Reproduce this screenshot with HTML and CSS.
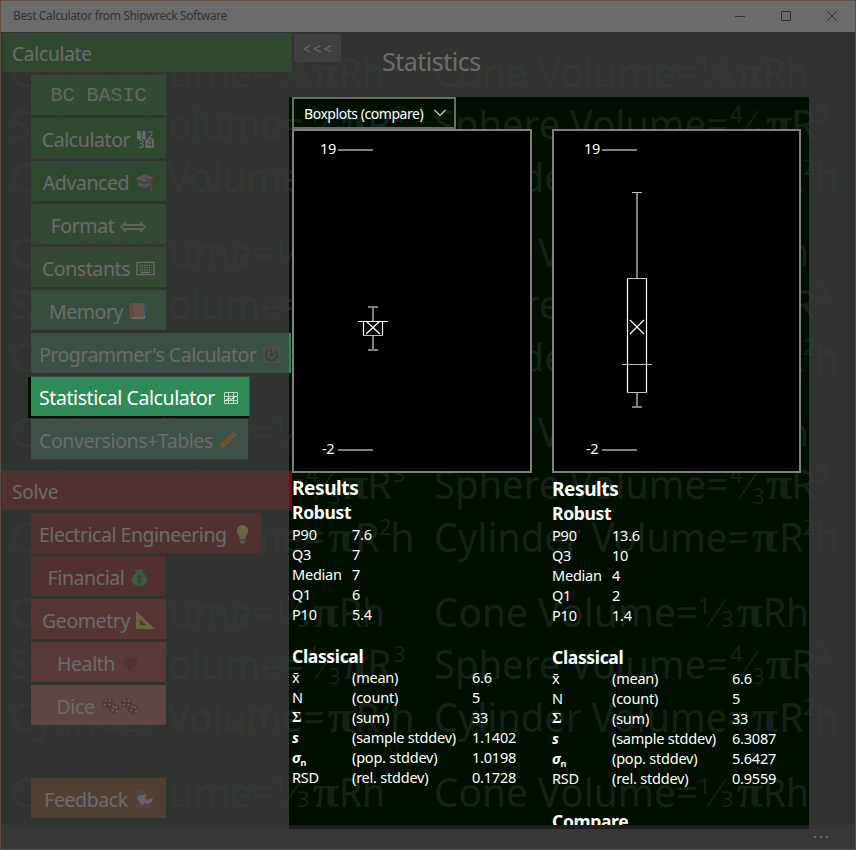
FILE: index.html
```html
<!DOCTYPE html>
<html lang="en">
<head>
<meta charset="utf-8">
<title>Best Calculator from Shipwreck Software</title>
<link rel="stylesheet" href="styles.css">
</head>
<body>
<div class="window">
  <header class="titlebar">
    <span class="app-title">Best Calculator from Shipwreck Software</span>
    <svg class="caption-buttons" width="138" height="31" viewBox="0 0 138 31" fill="none" stroke="#000"><path d="M18 15.500h10M64.500 10.500h9v9h-9zM110 10l10 10M120 10l-10 10"/></svg>
  </header>

  <div class="content">
    <svg class="watermark" width="854" height="793" viewBox="1 31 854 793">
      <defs>
        <g id="formulas">
          <text x="10" y="86" textLength="264" lengthAdjust="spacingAndGlyphs">Cone Volume=</text>
          <text class="num" x="274" y="73">1</text><path d="M283 86l19-28"/><text class="num" x="297" y="86">3</text>
          <text class="pi" x="313" y="86" textLength="26" lengthAdjust="spacingAndGlyphs">π</text>
          <text x="339" y="86" textLength="46" lengthAdjust="spacingAndGlyphs">Rh</text>

          <text x="10" y="138" textLength="294" lengthAdjust="spacingAndGlyphs">Sphere Volume=</text>
          <text class="num" x="306" y="121">4</text><path d="M315 138l19-28"/><text class="num" x="328" y="143">3</text>
          <text class="pi" x="342" y="138" textLength="26" lengthAdjust="spacingAndGlyphs">π</text>
          <text x="367" y="138">R</text><text class="num" x="393" y="121">3</text>

          <text x="10" y="191" textLength="315" lengthAdjust="spacingAndGlyphs">Cylinder Volume=</text>
          <text class="pi" x="328" y="191" textLength="26" lengthAdjust="spacingAndGlyphs">π</text>
          <text x="355" y="191">R</text><text class="num" x="379" y="174">2</text><text x="390" y="191">h</text>
        </g>
        <g id="formula-row"><use href="#formulas"/><use href="#formulas" x="424"/></g>
      </defs>
      <use href="#formula-row"/><use href="#formula-row" y="180"/><use href="#formula-row" y="360"/><use href="#formula-row" y="540"/><use href="#formula-row" y="720"/>
    </svg>

    <nav class="sidebar">
      <h2 class="group calc">Calculate</h2>
      <ul class="menu">
        <li class="item c1 mono">BC BASIC</li>
        <li class="item c2">Calculator <svg class="icon" viewBox="0 0 20 20"><path fill="#fff" d="M1 1h9v9H1zM10 10h9v9h-9z"/><g font-size="10.500" font-weight="500"><text x="2.500" y="9.200" fill="#006400">1</text><text x="12" y="9.200" fill="#fff">2</text><text x="2.500" y="18.600" fill="#fff">3</text><text x="11.500" y="18.400" fill="#006400">4</text></g></svg></li>
        <li class="item c3">Advanced <svg class="icon" viewBox="0 0 20 20"><path fill="#aaa" d="M0 6l10-5 10 4-10 5z"/><path fill="#999" d="M3 9l7 3 6-3v4q-6 4-13 0z"/><path d="M10 5l7 3v12" fill="none" stroke="#f04030" stroke-width="1.600"/></svg></li>
        <li class="item c4">Format <svg class="icon wide" viewBox="0 0 26 12"><path d="M4 4h18M4 8h18M6 1L1 6l5 5M20 1l5 5-5 5" fill="none" stroke="#fff" stroke-width="1.300"/></svg></li>
        <li class="item c5">Constants <svg class="icon" viewBox="0 0 20 20"><path d="M1 3.500h18v13H1z" fill="none" stroke="#fff" stroke-width="1.400"/><path d="M3.500 6.500h13M3.500 9h13M3.500 11.500h13" stroke="#eee" stroke-width="1.500" stroke-dasharray="1.500 1"/><path d="M5 14.200h10" stroke="#fff" stroke-width="1.600"/></svg></li>
        <li class="item c6">Memory <svg class="icon" viewBox="0 0 20 20"><path fill="#fff" d="M3 3h14v15H3z"/><path fill="#f09060" d="M1 1h14v15H3v2H1z"/><path d="M3.500 2v14" stroke="#a05030"/><path fill="#20a0d8" d="M15 3h2l2 2-2 2h-2zM15 7.500h4v3h-4zM15 11h3l-1 3h-2z"/></svg></li>
        <li class="item c7 auto programmer">Programmer's Calculator <svg class="icon" viewBox="0 0 20 20"><rect x="1" y="1" width="18" height="18" rx="1" fill="#7c7c7c"/><path d="M6.500 5.500a6 6 0 1 0 7 0" fill="none" stroke="#185030" stroke-width="2"/><path d="M10 4v4" stroke="#185030" stroke-width="2"/><circle cx="10" cy="10" r="2" fill="#185030"/></svg></li>
        <li class="item c7 auto statistical">Statistical Calculator <svg class="icon" viewBox="0 0 19 19"><path d="M3.500 4.500h13v11h-13zM3.500 8.500h13M3.500 12.500h13M7.500 4.500v11M12.500 4.500v11" fill="none" stroke="#b8dcc8"/><path d="M4 13l4-3 2 1.500L15 8" fill="none" stroke="#fff"/></svg></li>
        <li class="item c8 auto conversions">Conversions+Tables <svg class="icon" viewBox="0 0 20 20"><path d="M0 15L15 0l4 4L4 19z" fill="#f0a030"/><path d="M4 11l2 2M7 8l2 2M10 5l2 2M13 2l2 2" stroke="#80501a"/></svg></li>
      </ul>
      <h2 class="group solve">Solve</h2>
      <ul class="menu">
        <li class="item s1 auto electrical">Electrical Engineering <svg class="icon" viewBox="0 0 20 20"><path fill="#ffe060" d="M10 0a6 6 0 0 1 6 6c0 4-3 4-3 9H7c0-5-3-5-3-9a6 6 0 0 1 6-6z"/><path fill="#aaa" d="M7 16h6v2l-3 3-3-3z"/></svg></li>
        <li class="item s1">Financial <svg class="icon" viewBox="0 0 20 20"><path fill="#30c850" d="M5 1l3 1 2-1 5 1-2 3c8 5 6 14-3 14S-1 10 7 5z"/><path d="M12.500 9c-4-2-6 2-2.500 3s2 4-2.500 3M10 7v10" fill="none" stroke="#303a20" stroke-width="1.200"/></svg></li>
        <li class="item s2">Geometry <svg class="icon" viewBox="0 0 20 20"><path fill="#ffe040" fill-rule="evenodd" d="M0 0l20 19H0zM4 9v6h7z"/></svg></li>
        <li class="item s2 health">Health <svg class="icon" viewBox="0 0 20 20"><path fill="#8b1018" d="M10 18C3 12 1 9 3 5c2-3 6-2 7 1 1-3 5-4 7-1 2 4 0 7-7 13z"/><path d="M1 5V1h4M15 1h4v4M1 14v4h4M15 18h4v-4" stroke="#a52222" fill="none"/></svg></li>
        <li class="item s3">Dice <svg class="icon dice" viewBox="0 0 40 20"><defs><g id="dice"><path fill="#c81820" d="M1 5l5-4 6 2 1 5-5 4-6-2zM8 10l6-3 6 3-1 5-5 4-6-4z"/><g fill="#fff"><circle cx="5" cy="4" r="1"/><circle cx="9" cy="4" r="1"/><circle cx="4" cy="8" r="1"/><circle cx="9" cy="8" r="1"/><circle cx="13" cy="10" r="1"/><circle cx="16" cy="11" r="1"/><circle cx="12" cy="14" r="1"/><circle cx="17" cy="15" r="1"/></g></g></defs><use href="#dice"/><use href="#dice" x="20"/></svg></li>
      </ul>
      <div class="menu feedback-slot"><div class="item fb">Feedback <svg class="icon" viewBox="0 0 20 20"><path fill="#c84050" d="M0 19q1-5 5-5l5 1 6-1 2 5z"/><path fill="#78716a" d="M1 8q0-8 7-8 6 1 6 6L5 5l-1 6z"/><path fill="#eee" d="M4 6l8-1 1 6-4 5-4-4zM11 13l4-3 5-1-1 3-5 3z"/><path d="M7 8h1M10.500 8h1" stroke="#222"/></svg></div></div>
    </nav>

    <main class="page">
      <div class="page-head"><span class="collapse">&lt;&lt;&lt;</span><h1>Statistics</h1></div>
      <div class="select">Boxplots (compare)<svg width="12" height="8" viewBox="0 0 12 8"><path d="M.500 1l5.500 5.500L11.500 1" fill="none" stroke="#ccc" stroke-width="1.200"/></svg></div>
      <div class="columns">
        <section class="sample first">
          <svg class="plot" width="240" height="344" viewBox="0 0 240 344">
            <rect class="frame" x="1" y="1" width="238" height="342"/>
            <text x="28" y="25">19</text><text x="30" y="325">-2</text>
            <path class="line" d="M46 21h35M46 321h35M81 178v15M76 178h10M81 207v14M76 221h10"/>
            <path class="box" d="M71.500 192.500v14M90.500 192.500v14M66 192.500h30M74 192l14 13M88 192l-14 13"/>
            <path class="line thin" d="M71 206.500h20"/>
          </svg>
          <h2>Results</h2>
          <h3>Robust</h3>
          <dl class="robust"><dt>P90</dt><dd>7.6</dd><dt>Q3</dt><dd>7</dd><dt>Median</dt><dd>7</dd><dt>Q1</dt><dd>6</dd><dt>P10</dt><dd>5.4</dd></dl>
          <h3>Classical</h3>
          <div class="classical">
            <span>x̄</span><span>(mean)</span><span>6.6</span>
            <span>N</span><span>(count)</span><span>5</span>
            <b class="sum">Σ</b><span>(sum)</span><span>33</span>
            <b><i>s</i></b><span>(sample stddev)</span><span>1.1402</span>
            <b><i>σ</i><small>n</small></b><span>(pop. stddev)</span><span>1.0198</span>
            <span>RSD</span><span>(rel. stddev)</span><span>0.1728</span>
          </div>
        </section>
        <section class="sample second">
          <svg class="plot" width="249" height="344" viewBox="0 0 249 344">
            <rect class="frame" x="1" y="1" width="247" height="342"/>
            <text x="32" y="25">19</text><text x="34" y="325">-2</text>
            <path class="line" d="M50 21h35M50 321h35M85 64v86M85 264v14M80 278h10"/>
            <path class="box" d="M75.500 149.500v114M94.500 149.500v114M78 191l14 14M92 191l-14 14"/>
            <path class="line thin" d="M80 63.500h10M75 149.500h20M70 235.500h30M75 263.500h20"/>
          </svg>
          <h2>Results</h2>
          <h3>Robust</h3>
          <dl class="robust"><dt>P90</dt><dd>13.6</dd><dt>Q3</dt><dd>10</dd><dt>Median</dt><dd>4</dd><dt>Q1</dt><dd>2</dd><dt>P10</dt><dd>1.4</dd></dl>
          <h3>Classical</h3>
          <div class="classical">
            <span>x̄</span><span>(mean)</span><span>6.6</span>
            <span>N</span><span>(count)</span><span>5</span>
            <b class="sum">Σ</b><span>(sum)</span><span>33</span>
            <b><i>s</i></b><span>(sample stddev)</span><span>6.3087</span>
            <b><i>σ</i><small>n</small></b><span>(pop. stddev)</span><span>5.6427</span>
            <span>RSD</span><span>(rel. stddev)</span><span>0.9559</span>
          </div>
          <h3 class="compare">Compare</h3>
        </section>
      </div>
    </main>
  </div>

  <footer class="appbar"><svg width="16" height="4" viewBox="0 0 16 4"><path fill="#fff" d="M0 1h2v2H0zM6 1h2v2H6zM12 1h2v2h-2z"/></svg></footer>
  <svg class="spotlight" width="856" height="850" viewBox="0 0 856 850"><path fill-rule="evenodd" d="M0 0h856v850H0zM289 97h520v732H289zM28 377h221v41H28z"/></svg>
</div>
</body>
</html>
```

FILE: styles.css
```css
* { box-sizing: border-box; }
body {
  margin: 0;
  font-family: "Noto Sans", "Open Sans", sans-serif;
  color: #fff;
}
h1, h2, h3, ul, dl, dd { margin: 0; padding: 0; list-style: none; font-weight: 400; }

.window {
  position: relative;
  display: flex;
  flex-direction: column;
  width: 856px;
  height: 850px;
  border: 1px solid #d08050;
  background: #000f00;
}
.titlebar {
  display: flex;
  justify-content: space-between;
  height: 31px;
  flex: none;
  background: #fff;
  color: #000;
}
.app-title { padding-left: 12px; font-size: 12px; line-height: 29px; letter-spacing: -0.38px; }
.content { position: relative; display: flex; flex: 1; min-height: 0; overflow: hidden; }

.watermark { position: absolute; left: 0; top: 0; font-size: 40px; fill: #162218; }
.watermark path { stroke: #162218; stroke-width: 2; }
.watermark .num { font-size: 22px; }
.watermark .pi { font-family: "Liberation Serif", serif; font-weight: 700; font-size: 46px; }

.sidebar { position: relative; width: 291px; padding: 1px 0 0 1px; flex: none; }
.group { height: 39px; padding-left: 10px; font-size: 19px; line-height: 43px; letter-spacing: -0.2px; }
.group.calc { background: #006400; }
.group.solve { background: #8b0000; margin-top: 12px; }
.menu { display: flex; flex-direction: column; align-items: flex-start; gap: 3px; padding: 3px 0 0 29px; }
.item {
  display: flex;
  align-items: center;
  justify-content: center;
  gap: 6px;
  width: 135px;
  height: 40px;
  padding-top: 4px;
  font-size: 19.5px;
  line-height: 36px;
  letter-spacing: -0.42px;
  white-space: nowrap;
}
.auto { justify-content: flex-start; padding-left: 8px; }
.programmer { width: 260px; letter-spacing: -0.5px; }
.statistical { width: 219px; }
.conversions { width: 217px; }
.electrical { width: 230px; letter-spacing: -0.47px; }
.mono { font-family: "Liberation Mono", monospace; font-size: 20px; letter-spacing: 0; padding: 2px 0 0; color: #e0e8e0; }
.icon { width: 19px; height: 19px; margin-top: -1px; flex: none; }
.icon.wide { width: 26px; height: 12px; margin-top: 1px; }
.icon.dice { width: 40px; height: 19px; }
.c1 { background: #0c6c12; }
.c2, .c3 { background: #006400; }
.c4 { background: #0e6c12; }
.c5 { background: #126812; }
.c6 { background: #1e8040; }
.c7 { background: #2e8b57; }
.c8 { background: #3c8b68; }
.s1 { background: #8b0000; }
.s2 { background: #a81818; }
.health { background: #b22828; }
.s3 { background: #cd5c5c; }
.fb { background: #8b4513; }
.feedback-slot { padding-top: 53px; }

.page { position: relative; width: 520px; }
.page-head { display: flex; height: 65px; padding: 2px 0 0 2px; }
.collapse { width: 47px; height: 28px; padding-left: 2px; background: #404040; font-size: 14px; line-height: 30px; letter-spacing: 2.5px; text-align: center; }
h1 { margin-left: 41px; font-size: 25px; line-height: 54px; letter-spacing: -0.5px; }
.select {
  display: flex;
  align-items: center;
  justify-content: space-between;
  width: 164px;
  height: 32px;
  padding: 0 8px 0 10px;
  border: 2px solid #667066;
  font-size: 14px;
  letter-spacing: -0.45px;
}
.columns { display: flex; gap: 20px; }
.sample.first { width: 240px; }
.sample.second { width: 249px; }
.plot { display: block; background: #000; font-size: 14.5px; letter-spacing: -0.3px; fill: #fff; }
.frame { fill: #000; stroke: #808080; stroke-width: 2; }
.plot .line { fill: none; stroke: #808080; stroke-width: 2; }
.plot .thin { stroke: #bbb; stroke-width: 1; }
.plot .box { fill: none; stroke: #fff; stroke-width: 1.2; }
.sample h2 { font-size: 19px; font-weight: 700; line-height: 26px; height: 27px; padding-top: 2px; letter-spacing: -0.4px; }
.sample h3 { font-size: 17.5px; font-weight: 700; line-height: 25px; height: 24px; letter-spacing: -0.35px; }
.second h2 { height: 28px; padding-top: 3px; }
.robust, .classical { display: grid; grid-auto-rows: 20px; line-height: 20px; font-size: 14.5px; letter-spacing: -0.22px; }
.robust { grid-template-columns: 60px 1fr; margin-bottom: 20px; }
.classical { grid-template-columns: 60px 120px 1fr; margin-top: -1px; }
.sum { font-family: "Liberation Serif", serif; }
.classical small { font-size: 9px; line-height: 1; vertical-align: -3px; }
.sample .compare { margin-top: 21px; height: 25px; }

.appbar { display: flex; flex: none; justify-content: flex-end; align-items: center; height: 24px; padding-right: 25px; background: #1f1f1f; }
.spotlight { position: absolute; left: -1px; top: -1px; fill: rgb(62, 62, 62); fill-opacity: 0.77; }
```
